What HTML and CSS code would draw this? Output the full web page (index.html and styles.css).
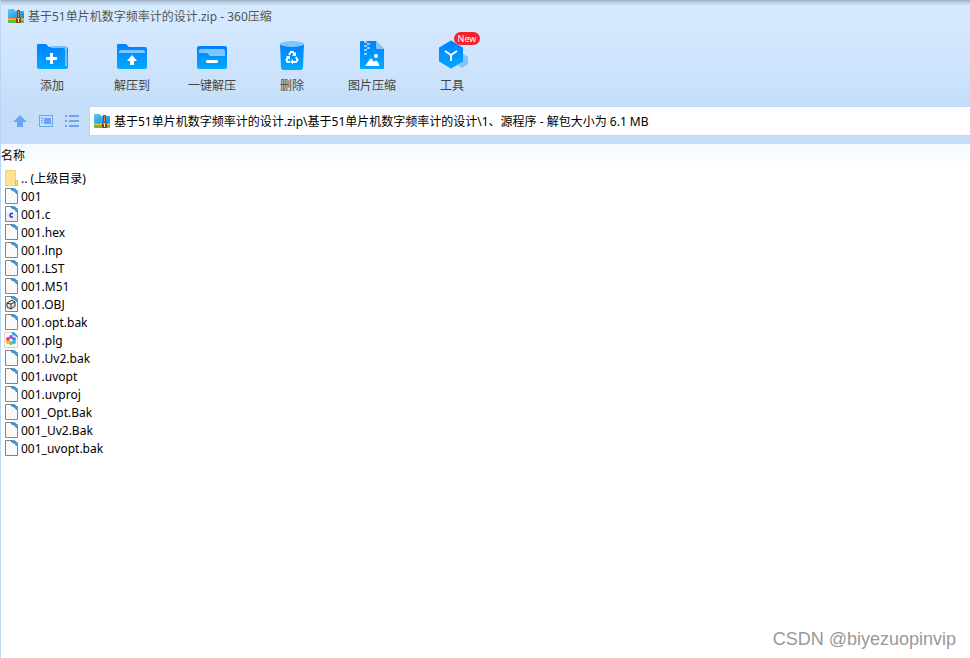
FILE: index.html
```
<!DOCTYPE html>
<html lang="zh-CN">
<head>
  <meta charset="UTF-8">
  <meta name="viewport" content="width=device-width, initial-scale=1.0">
  <title>基于51单片机数字频率计的设计.zip - 360压缩</title>
  <link rel="stylesheet" href="styles.css">
</head>
<body>

  <!-- shared icons -->
  <svg class="sprite" width="0" height="0" aria-hidden="true">
    <defs>
      <linearGradient id="blue" x1="0" y1="0" x2="0" y2="1">
        <stop offset="0" stop-color="#0080ff"/>
        <stop offset="1" stop-color="#00aaff"/>
      </linearGradient>
      <linearGradient id="sky" x1="0" y1="0" x2="1" y2="1">
        <stop offset="0" stop-color="#5cc8fa"/>
        <stop offset="1" stop-color="#1784dc"/>
      </linearGradient>
    </defs>
    <symbol id="zip" viewBox="0 0 16 16">
      <path d="M0 2q0-1 1-1h5l1 2h8q1 0 1 1v7H0z" fill="url(#sky)"/>
      <path d="M0 10h16v2H0z" fill="#f58a1f"/>
      <path d="M0 11h16v1H0z" fill="#ffc23d"/>
      <path d="M0 12h16v2q0 1-1 1H1q-1 0-1-1z" fill="#72b82c"/>
      <path d="M9 2h3v13H9z" fill="#7c4a1c"/>
      <path d="M10 3h1v6h-1z" fill="#c98a45"/>
      <path d="M8 10h5v4q0 1-1 1H9q-1 0-1-1z" fill="#7a4515"/>
      <path d="M9 10h3v1H9z" fill="#f0b040"/>
      <path d="M10 11h1v3h-1z" fill="#fff3d6"/>
    </symbol>
    <symbol id="page" viewBox="0 0 16 16">
      <path d="M1.500.500h8l4 4v11h-12z" fill="#f9fafb" stroke="#858585"/>
      <path d="M7 0h3l4 3v3h-2l-1-2-4-2z" fill="#2877ae"/>
      <path d="M8 0h2l1 2-1 1-2-1zM11 2l3 1v3h-1l-2-2z" fill="#41a1e6"/>
    </symbol>
  </svg>

  <header class="top">
    <div class="titlebar">
      <svg width="16" height="16"><use href="#zip"/></svg>
      <span>基于51单片机数字频率计的设计.zip - 360压缩</span>
    </div>

    <nav class="toolbar">
      <button class="tool" type="button">
        <svg width="40" height="34" viewBox="0 0 40 34">
          <path d="M5 7q0-1 1-1h8l3 3h17q2 0 2 2v18q0 2-2 2H7q-2 0-2-2z" fill="url(#blue)"/>
          <path d="M19 8h14q2 0 2 2v18h-2V12q0-2-2-2H19z" fill="#73c2ff"/>
          <path d="M18 15h3v4h4v3h-4v4h-3v-4h-4v-3h4z" fill="#fff"/>
        </svg>
        <span>添加</span>
      </button>
      <button class="tool" type="button">
        <svg width="40" height="34" viewBox="0 0 40 34">
          <path d="M5 7q0-1 1-1h8l3 3h16q2 0 2 2v18q0 2-2 2H7q-2 0-2-2z" fill="url(#blue)"/>
          <path d="M7 15v-1q0-2 2-2h22q2 0 2 2v1z" fill="#7fc6ff"/>
          <path d="M20 17l5 6h-3v4h-4v-4h-3z" fill="#fff"/>
        </svg>
        <span>解压到</span>
      </button>
      <button class="tool" type="button">
        <svg width="40" height="34" viewBox="0 0 40 34">
          <rect x="5" y="8" width="30" height="23" rx="2" fill="url(#blue)"/>
          <path d="M7 14v-1q0-2 2-2h22q2 0 2 2v5H18l-3-3H7z" fill="#7fc6ff"/>
          <rect x="14" y="22" width="12" height="3" rx="1" fill="#fff"/>
        </svg>
        <span>一键解压</span>
      </button>
      <button class="tool" type="button">
        <svg width="40" height="34" viewBox="0 0 40 34">
          <path d="M8 6h24l-1 23q0 3-3 3H12q-3 0-3-3z" fill="url(#blue)"/>
          <ellipse cx="20" cy="6" rx="12" ry="3" fill="#7fc6ff"/>
          <g fill="none" stroke="#fff" stroke-width="2">
            <path d="M17 17l2-3h2l2 3"/>
            <path d="M24 19l1.500 3-1.500 2h-3"/>
            <path d="M18 24h-2.500L14.500 22l1.500-3"/>
          </g>
          <path d="M24 14v4h-4zM21 21v5l-3-2zM14 18h4l0 4z" fill="#fff"/>
        </svg>
        <span>删除</span>
      </button>
      <button class="tool" type="button">
        <svg width="40" height="34" viewBox="0 0 40 34">
          <path d="M8 4q0-1 1-1h15l8 8v19q0 1-1 1H9q-1 0-1-1z" fill="url(#blue)"/>
          <path d="M24 3l8 8h-7q-1 0-1-1z" fill="#7fc6ff"/>
          <path d="M12 3h3v2h-3zM15 5h3v2h-3zM12 7h3v2h-3zM15 9h3v2h-3zM12 11h3v2h-3zM12 15h3v2h-3z" fill="#8bd0ff"/>
          <circle cx="24" cy="18" r="2" fill="#fff"/>
          <path d="M13 28l5-7q1-1 2 0l2 3 1-1q1-1 2 0l2 3v2z" fill="#fff"/>
        </svg>
        <span>图片压缩</span>
      </button>
      <button class="tool" type="button">
        <svg width="40" height="34" viewBox="0 0 40 34">
          <path d="M31 16l5 3v7l-6 4-6-4z" fill="#80c4ff"/>
          <path d="M18 3q1-1 2 0l10 6q1 0 1 1v13q0 1-1 1l-10 6q-1 1-2 0L8 24q-1 0-1-1V10q0-1 1-1z" fill="url(#blue)"/>
          <path d="M13 13l6 4 6-4M19 17v6" fill="none" stroke="#fff" stroke-width="2"/>
        </svg>
        <span>工具</span>
        <span class="badge">New</span>
      </button>
    </nav>

    <div class="pathbar">
      <button class="nav-btn" type="button" aria-label="向上">
        <svg width="16" height="16" viewBox="0 0 16 16"><path d="M8 2l7 7h-4v5H5V9H1z" fill="#6da3f0"/></svg>
      </button>
      <button class="nav-btn" type="button" aria-label="预览">
        <svg width="16" height="16" viewBox="0 0 16 16">
          <path d="M1 2h14v12H1zM2 3v10h12V3z" fill="#6da3f0" fill-rule="evenodd"/>
          <path d="M3 5h2v1H3zM3 7h2v1H3zM3 9h2v1H3zM6 5h7v6H6z" fill="#6da3f0"/>
        </svg>
      </button>
      <button class="nav-btn" type="button" aria-label="列表">
        <svg width="16" height="16" viewBox="0 0 16 16">
          <path d="M1 2h2v2H1zM5 2h10v2H5zM1 7h2v2H1zM5 7h10v2H5zM1 12h2v2H1zM5 12h10v2H5z" fill="#6da3f0"/>
        </svg>
      </button>
      <label class="path">
        <svg width="16" height="16"><use href="#zip"/></svg>
        <input type="text" aria-label="路径" value="基于51单片机数字频率计的设计.zip\基于51单片机数字频率计的设计\1、源程序 - 解包大小为 6.1 MB">
      </label>
    </div>
  </header>

  <main>
    <table class="files">
      <thead>
        <tr><th>名称</th></tr>
      </thead>
      <tbody>
        <tr><td><a href="#">
          <svg width="16" height="16" viewBox="0 0 16 16">
            <path d="M1 0h11v16H1z" fill="#ffe392"/>
            <path d="M1 0h11v16H1zM2 1v14h9V1z" fill="#f3d273" fill-rule="evenodd"/>
            <path d="M11 10h3v6h-3z" fill="#e9bd45"/>
            <path d="M12 11h1v4h-1z" fill="#ffe08a"/>
          </svg>.. (上级目录)</a></td></tr>
        <tr><td><a href="#"><svg width="16" height="16"><use href="#page"/></svg>001</a></td></tr>
        <tr><td><a href="#">
          <svg width="16" height="16" viewBox="0 0 16 16">
            <use href="#page"/>
            <path d="M2 6h11v9H2z" fill="#efeef8"/>
            <path d="M9 7.500H7.500Q6 7.500 6 9q0 2 1.500 2H9" fill="none" stroke="#2b35c4" stroke-width="1.500"/>
          </svg>001.c</a></td></tr>
        <tr><td><a href="#"><svg width="16" height="16"><use href="#page"/></svg>001.hex</a></td></tr>
        <tr><td><a href="#"><svg width="16" height="16"><use href="#page"/></svg>001.lnp</a></td></tr>
        <tr><td><a href="#"><svg width="16" height="16"><use href="#page"/></svg>001.LST</a></td></tr>
        <tr><td><a href="#"><svg width="16" height="16"><use href="#page"/></svg>001.M51</a></td></tr>
        <tr><td><a href="#">
          <svg width="16" height="16" viewBox="0 0 16 16">
            <use href="#page"/>
            <circle cx="7" cy="9" r="5" fill="#e6e6e6"/>
            <path d="M3 7l5-3 3 2v4l-4 3-4-2zM3 7l4 1 4-2M7 8v5" fill="none" stroke="#333"/>
          </svg>001.OBJ</a></td></tr>
        <tr><td><a href="#"><svg width="16" height="16"><use href="#page"/></svg>001.opt.bak</a></td></tr>
        <tr><td><a href="#">
          <svg width="16" height="16" viewBox="0 0 16 16">
            <path d="M.500.500h9l4 4v11H.500z" fill="#fafafa" stroke="#d5d5d5"/>
            <path d="M8 0h2l4 4v2l-3-2-3-1z" fill="#41a1e6"/>
            <circle cx="7" cy="5" r="2" fill="#a354e8"/>
            <circle cx="10" cy="7" r="2" fill="#477bf5"/>
            <circle cx="10" cy="10" r="2" fill="#21bfe0"/>
            <circle cx="7" cy="11" r="2" fill="#5cd05a"/>
            <circle cx="4" cy="10" r="2" fill="#f8b928"/>
            <circle cx="4" cy="7" r="2" fill="#f73c68"/>
            <circle cx="7" cy="8" r="1" fill="#fff"/>
          </svg>001.plg</a></td></tr>
        <tr><td><a href="#"><svg width="16" height="16"><use href="#page"/></svg>001.Uv2.bak</a></td></tr>
        <tr><td><a href="#"><svg width="16" height="16"><use href="#page"/></svg>001.uvopt</a></td></tr>
        <tr><td><a href="#"><svg width="16" height="16"><use href="#page"/></svg>001.uvproj</a></td></tr>
        <tr><td><a href="#"><svg width="16" height="16"><use href="#page"/></svg>001_Opt.Bak</a></td></tr>
        <tr><td><a href="#"><svg width="16" height="16"><use href="#page"/></svg>001_Uv2.Bak</a></td></tr>
        <tr><td><a href="#"><svg width="16" height="16"><use href="#page"/></svg>001_uvopt.bak</a></td></tr>
      </tbody>
    </table>
  </main>

  <div class="watermark">CSDN @biyezuopinvip</div>

</body>
</html>
```
FILE: styles.css
```
* {
  box-sizing: border-box;
}

body {
  margin: 0;
  min-height: 100vh;
  position: relative;
  border-left: 1px solid #b9d6f5;
  background: #fff;
  color: #000;
  font-family: "Noto Sans", "Noto Sans CJK SC", sans-serif;
  font-size: 12px;
  line-height: 18px;
}

svg {
  display: block;
  flex-shrink: 0;
}

.sprite {
  position: absolute;
}

button {
  border: 0;
  padding: 0;
  background: none;
  font: inherit;
  cursor: pointer;
}

.top {
  background: linear-gradient(#94a9bd 0, #b9ccde 2px, #d5eaff 6px, #d4e9ff 24px, #cde3fc 72px, #c4def9 107px, #c4def9 144px);
}

.titlebar {
  display: flex;
  align-items: center;
  gap: 4px;
  height: 36px;
  padding: 0 7px 4px;
  color: #555;
}

.titlebar span {
  padding-top: 2px;
}

.toolbar {
  display: flex;
  padding: 2px 11px 0;
  height: 71px;
}

.tool {
  position: relative;
  display: flex;
  flex-direction: column;
  align-items: center;
  gap: 5px;
  width: 80px;
  height: 62px;
  color: #444;
}

.badge {
  position: absolute;
  top: -6px;
  left: 42px;
  width: 26px;
  height: 13px;
  border-radius: 7px;
  background: #f5222d;
  color: #fff;
  font-size: 9px;
  line-height: 13px;
}

.pathbar {
  display: flex;
  align-items: center;
  gap: 10px;
  padding: 0 0 9px 11px;
}

.path {
  display: flex;
  align-items: center;
  flex: 1;
  gap: 4px;
  height: 28px;
  padding-left: 4px;
  background: #fff;
  box-shadow: 0 0 0 1px #b9d8f5;
}

.path input {
  flex: 1;
  min-width: 0;
  padding: 2px 0 0;
  border: 0;
  outline: 0;
  background: none;
  color: #000;
  font: inherit;
}

.files {
  width: 100%;
  border-collapse: collapse;
}

.files th {
  height: 25px;
  padding: 0 0 2px;
  background: linear-gradient(#f3f9ff, #fff);
  font-weight: normal;
  text-align: left;
}

.files td {
  height: 18px;
  padding: 0 3px;
}

.files a {
  display: flex;
  align-items: flex-start;
  gap: 1px;
  height: 18px;
  color: #000;
  line-height: 20px;
  text-decoration: none;
}

.files a svg {
  margin-top: 1px;
}

.watermark {
  position: absolute;
  right: 14px;
  bottom: 7px;
  color: #999;
  font-family: "Liberation Sans", sans-serif;
  font-size: 18px;
  line-height: 24px;
}
```
